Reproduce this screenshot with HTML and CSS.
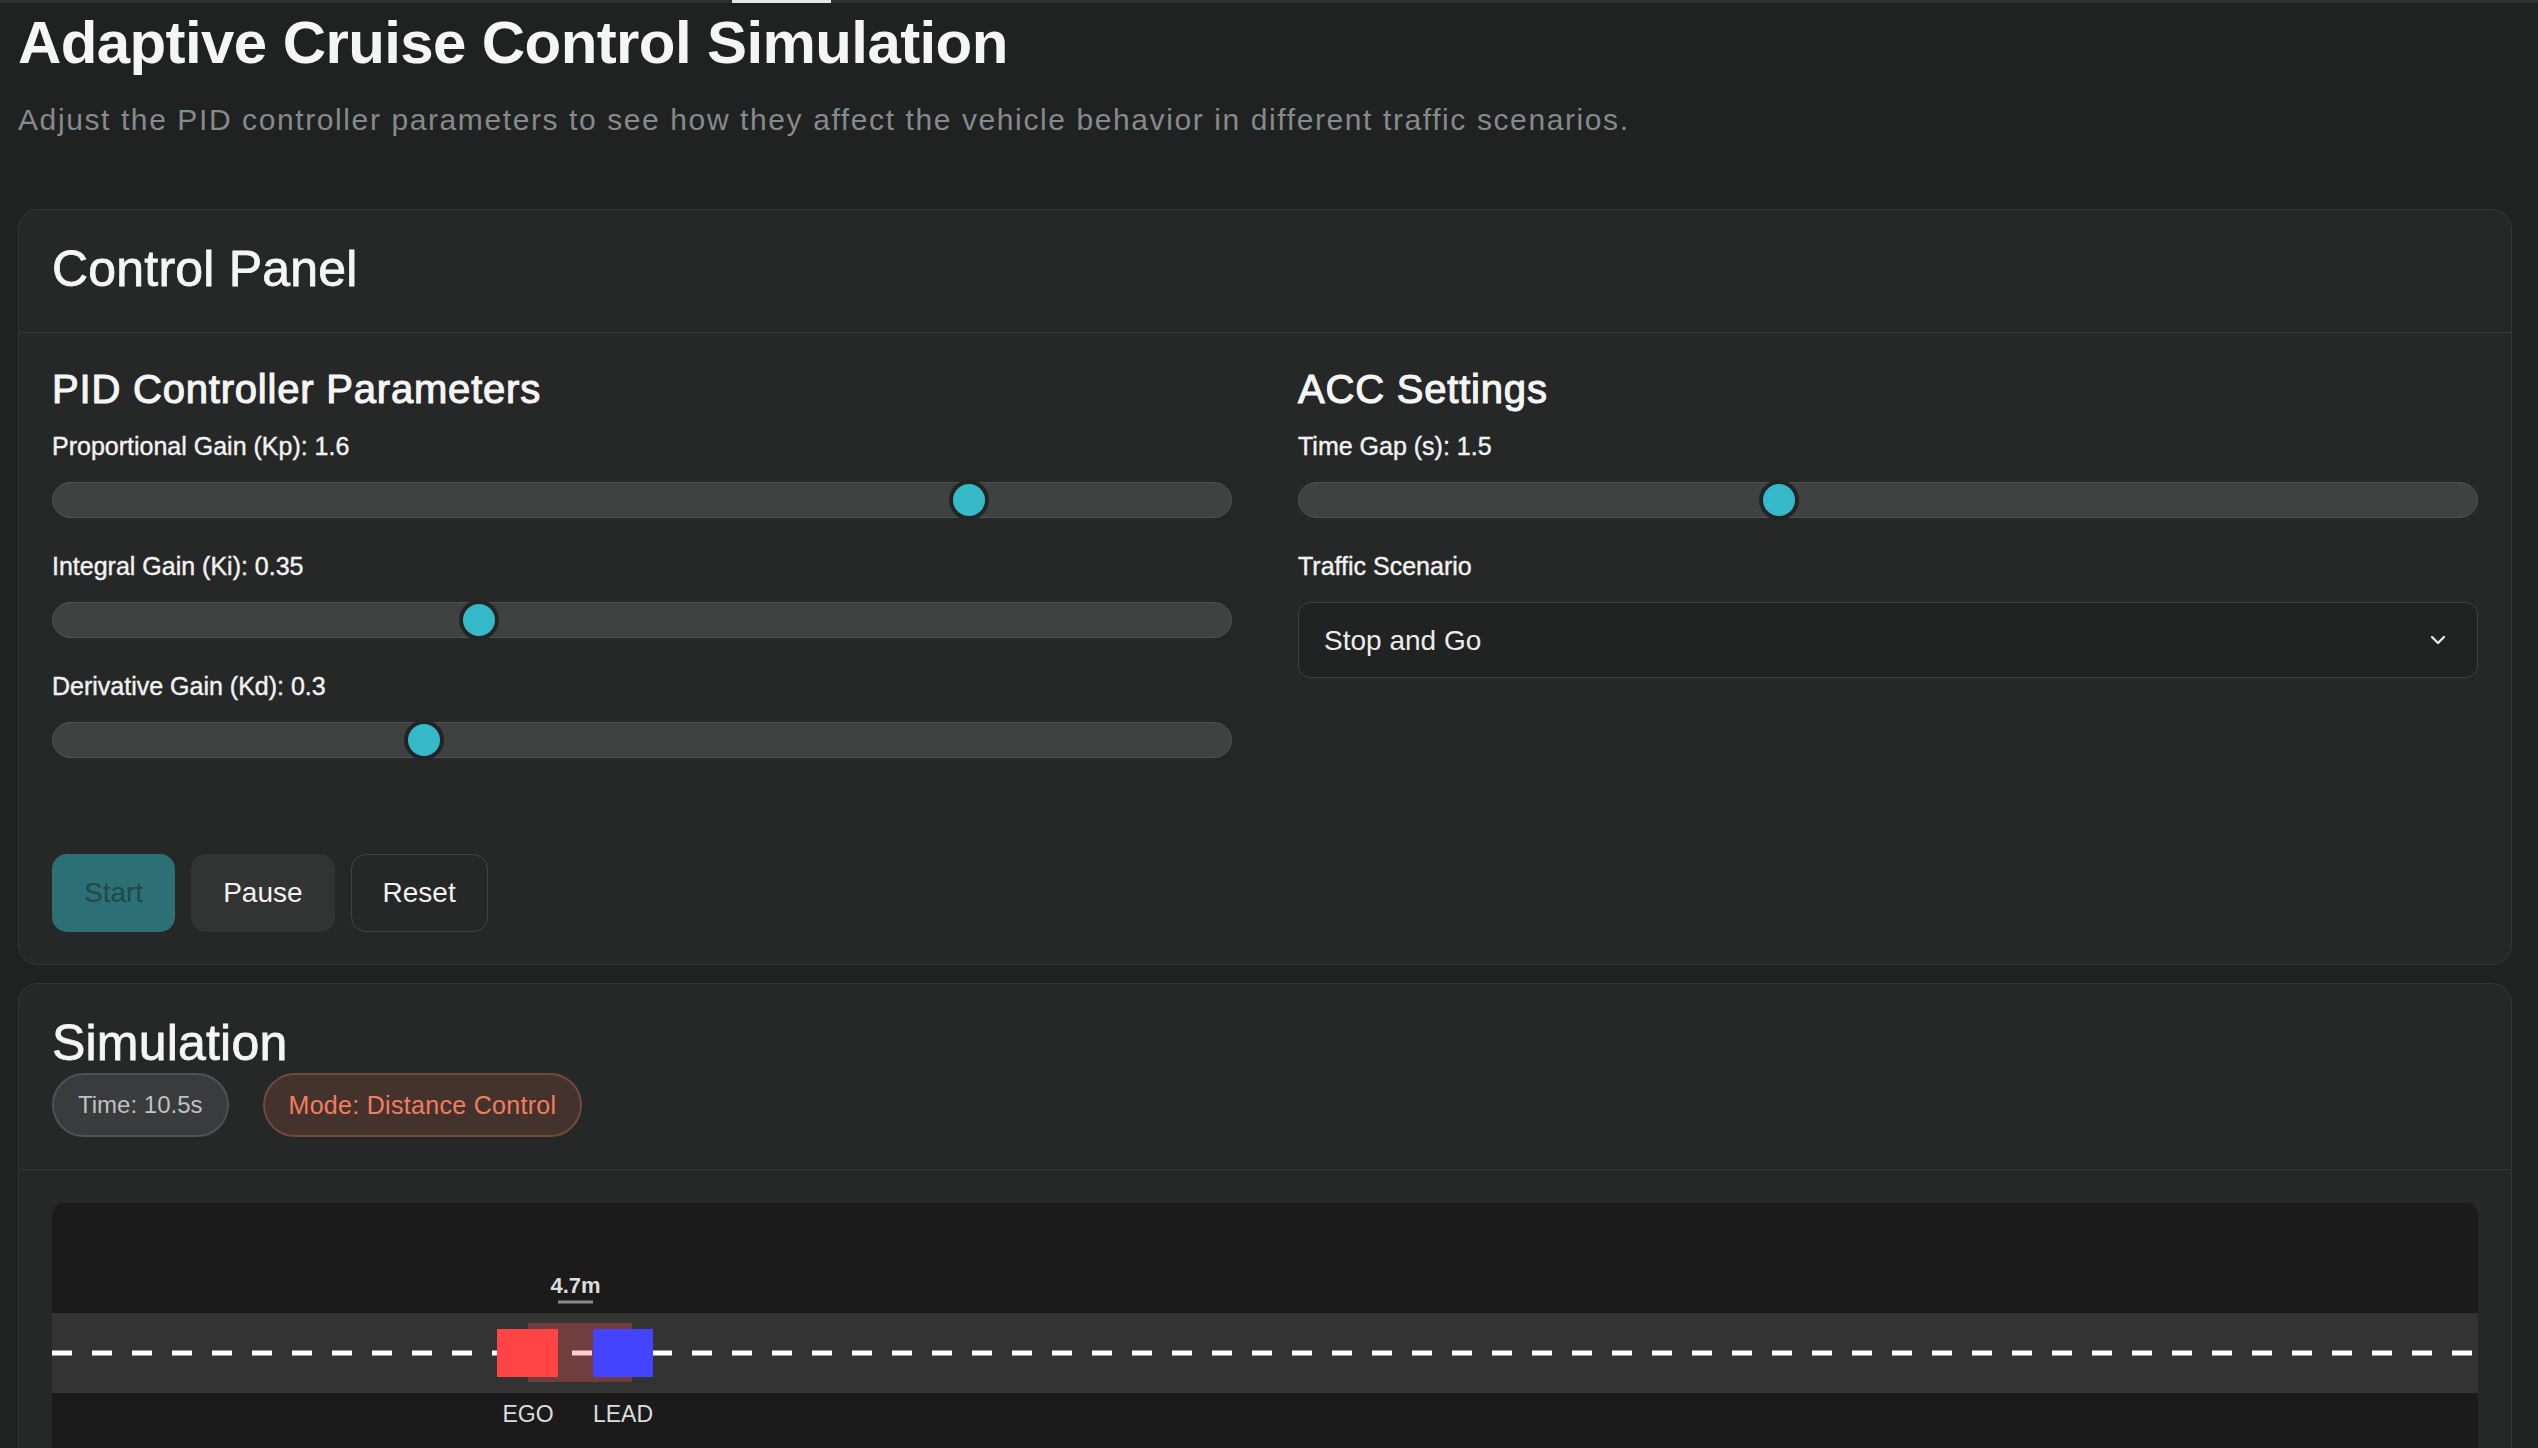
FILE: index.html
```html
<!DOCTYPE html>
<html lang="en">
<head>
<meta charset="utf-8">
<title>Adaptive Cruise Control Simulation</title>
<link rel="stylesheet" href="styles.css">
</head>
<body>
<div class="topbar"><span class="topbar-indicator"></span></div>
<main class="page">
  <h1 class="page-title">Adaptive Cruise Control Simulation</h1>
  <p class="page-subtitle">Adjust the PID controller parameters to see how they affect the vehicle behavior in different traffic scenarios.</p>

  <section class="card">
    <header class="card-header">
      <h2 class="card-title">Control Panel</h2>
    </header>
    <div class="card-body control-body">
      <div class="settings-grid">
        <div class="settings-col">
          <h3 class="section-title">PID Controller Parameters</h3>
          <div class="field">
            <label class="field-label" for="kp">Proportional Gain (Kp): 1.6</label>
            <div class="slider"><input id="kp" type="range" min="0" max="2" step="0.1" value="1.6"></div>
          </div>
          <div class="field">
            <label class="field-label" for="ki">Integral Gain (Ki): 0.35</label>
            <div class="slider"><input id="ki" type="range" min="0" max="1" step="0.05" value="0.35"></div>
          </div>
          <div class="field">
            <label class="field-label" for="kd">Derivative Gain (Kd): 0.3</label>
            <div class="slider"><input id="kd" type="range" min="0" max="1" step="0.05" value="0.3"></div>
          </div>
        </div>
        <div class="settings-col">
          <h3 class="section-title">ACC Settings</h3>
          <div class="field">
            <label class="field-label" for="gap">Time Gap (s): 1.5</label>
            <div class="slider"><input id="gap" type="range" min="0.5" max="3" step="0.1" value="1.5"></div>
          </div>
          <div class="field">
            <label class="field-label" for="scenario">Traffic Scenario</label>
            <div class="select-wrap">
              <select id="scenario" class="select">
                <option>Stop and Go</option>
                <option>Highway Cruise</option>
                <option>Cut-in</option>
              </select>
              <svg class="select-chevron" width="16" height="10" viewBox="0 0 16 10" aria-hidden="true">
                <polyline points="2,2 8,8 14,2" fill="none" stroke="#f2f2f2" stroke-width="2.2" stroke-linecap="round" stroke-linejoin="round"/>
              </svg>
            </div>
          </div>
        </div>
      </div>
      <div class="button-row">
        <button class="btn btn-start" disabled>Start</button>
        <button class="btn btn-pause">Pause</button>
        <button class="btn btn-reset">Reset</button>
      </div>
    </div>
  </section>

  <section class="card">
    <header class="card-header sim-header">
      <h2 class="card-title">Simulation</h2>
      <div class="badges">
        <span class="badge badge-time">Time: 10.5s</span>
        <span class="badge badge-mode">Mode: Distance Control</span>
      </div>
    </header>
    <div class="card-body sim-body">
      <div class="sim-canvas">
        <svg class="sim-svg" width="100%" height="300">
          <rect x="0" y="110" width="100%" height="80" fill="#333333"/>
          <line x1="0" y1="150" x2="2428" y2="150" stroke="#ffffff" stroke-width="5" stroke-dasharray="20 20"/>
          <rect x="476" y="120" width="104" height="59" fill="#ff5a5a" fill-opacity="0.3"/>
          <rect x="445" y="126" width="61" height="48" fill="#ff4444"/>
          <rect x="541" y="126" width="60" height="48" fill="#4444ff"/>
          <line x1="506" y1="99" x2="541" y2="99" stroke="#8a8a8a" stroke-width="3"/>
          <text class="sim-distance" x="523.5" y="90" text-anchor="middle">4.7m</text>
          <text class="sim-label" x="476" y="219" text-anchor="middle">EGO</text>
          <text class="sim-label" x="571" y="219" text-anchor="middle">LEAD</text>
        </svg>
      </div>
    </div>
  </section>
</main>
</body>
</html>
```
FILE: styles.css
```css
* {
  box-sizing: border-box;
}

html, body {
  margin: 0;
  padding: 0;
  background: #202121;
  color: #f2f2f2;
  font-family: "Liberation Sans", Arial, Helvetica, sans-serif;
}

.topbar {
  height: 3px;
  background: #2c2e2f;
  display: flex;
}

.topbar-indicator {
  margin-left: 732px;
  width: 99px;
  height: 3px;
  background: #e6e6e6;
}

.page {
  padding: 0 26px 0 18px;
}

.page-title {
  margin: 4px 0 0;
  font-size: 60px;
  line-height: 72px;
  font-weight: 700;
  letter-spacing: -0.6px;
  color: #f5f5f5;
}

.page-subtitle {
  margin: 23px 0 0;
  font-size: 30px;
  line-height: 36px;
  letter-spacing: 1.6px;
  color: #878a8d;
}

.card {
  background: #262727;
  border: 1px solid #353737;
  border-radius: 20px;
  margin-top: 71px;
}

.card + .card {
  margin-top: 18px;
}

.card-header {
  padding: 30px 33px 34px;
  border-bottom: 1px solid #353737;
}

.card-title {
  margin: 0;
  font-size: 50px;
  line-height: 58px;
  font-weight: 400;
  letter-spacing: 0.2px;
  color: #f5f5f5;
  -webkit-text-stroke: 0.8px #f5f5f5;
}

.card-body {
  padding: 33px 33px 32px;
}

.settings-grid {
  display: grid;
  grid-template-columns: 1fr 1fr;
  column-gap: 66px;
}

.settings-col {
  display: flex;
  flex-direction: column;
}

.section-title {
  margin: 0 0 18px;
  font-size: 40px;
  line-height: 47px;
  font-weight: 400;
  letter-spacing: 0.8px;
  color: #f5f5f5;
  -webkit-text-stroke: 1.1px #f5f5f5;
}

.field {
  display: flex;
  flex-direction: column;
  gap: 21px;
}

.field + .field {
  margin-top: 33px;
}

.field-label {
  font-size: 25px;
  line-height: 30px;
  color: #f2f2f2;
  -webkit-text-stroke: 0.4px #f2f2f2;
}

.slider {
  height: 36px;
  background: #404241;
  border: 1px solid #4e5050;
  border-radius: 18px;
  padding: 0 24px;
  display: flex;
  align-items: center;
}

.slider input {
  -webkit-appearance: none;
  appearance: none;
  width: 100%;
  height: 40px;
  margin: 0;
  background: transparent;
  outline: none;
}

.slider input::-webkit-slider-runnable-track {
  height: 40px;
  background: transparent;
  border: none;
}

.slider input::-webkit-slider-thumb {
  -webkit-appearance: none;
  appearance: none;
  width: 40px;
  height: 40px;
  border-radius: 50%;
  background: #35b9c9;
  border: 4px solid #232525;
}

.select-wrap {
  position: relative;
}

.select {
  -webkit-appearance: none;
  appearance: none;
  display: block;
  width: 100%;
  height: 76px;
  background: #212222;
  border: 1px solid #3e4041;
  border-radius: 12px;
  color: #ececec;
  font-family: inherit;
  font-size: 28px;
  padding: 0 60px 0 25px;
  outline: none;
}

.select-chevron {
  position: absolute;
  right: 32px;
  top: 33px;
  pointer-events: none;
}

.button-row {
  display: flex;
  gap: 16px;
  margin-top: 96px;
}

.btn {
  font-family: inherit;
  font-size: 28px;
  line-height: 34px;
  padding: 22px 32px;
  border-radius: 15px;
  border: none;
  color: #f2f2f2;
  background: #323333;
}

.btn-start {
  background: #2c7076;
  color: #21484b;
}

.btn-pause {
  background: #323333;
}

.btn-reset {
  background: transparent;
  padding: 21px 31px;
  border: 1px solid #434545;
}

.sim-header {
  padding-bottom: 32px;
}

.badges {
  display: flex;
  gap: 34px;
  margin-top: 1px;
}

.badge {
  font-size: 25px;
  line-height: 30px;
  padding: 15px 24px;
  border-radius: 32px;
  border: 2px solid;
}

.badge-time {
  background: #3a3b3c;
  border-color: #4f5152;
  color: #bfc1c2;
  font-size: 24px;
}

.badge-mode {
  background: #44322d;
  border-color: #704a3d;
  color: #f07e5e;
  letter-spacing: 0.3px;
}

.sim-canvas {
  background: #1b1b1b;
  border-radius: 12px;
  overflow: hidden;
}

.sim-svg {
  display: block;
}

.sim-distance {
  font-family: "Liberation Sans", Arial, sans-serif;
  font-size: 22px;
  font-weight: 700;
  fill: #dddddd;
}

.sim-label {
  font-family: "Liberation Sans", Arial, sans-serif;
  font-size: 23px;
  fill: #dddddd;
}
```
